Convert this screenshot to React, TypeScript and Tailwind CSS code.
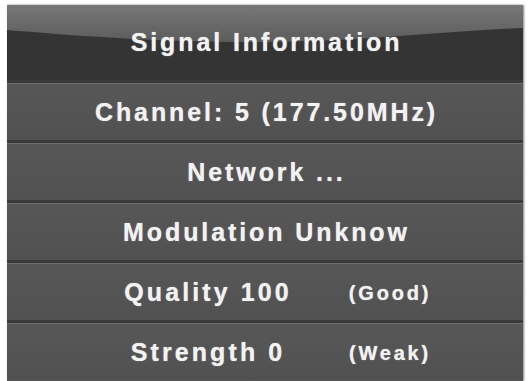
export default function App() {
  const rows = ["Channel: 5 (177.50MHz)", "Network ...", "Modulation Unknow"];
  const stats = [
    { label: "Quality 100", note: "(Good)" },
    { label: "Strength 0", note: "(Weak)" },
  ];

  return (
    <div className="w-[528px] h-[381px] bg-white pl-[7px] pr-[5px] pt-[5px] font-['Liberation_Sans',Arial,sans-serif] font-bold text-[#f2f2f2] [text-shadow:0_0_1px_rgba(255,255,255,0.7)]">
      <div className="h-[376px] flex flex-col bg-[#555] shadow-[1px_0_2px_rgba(0,0,0,0.5)]">
        {/* header with glossy band */}
        <div className="relative h-[75px] flex items-center justify-center bg-[#343434] overflow-hidden">
          <svg className="absolute inset-0" width="516" height="75" viewBox="0 0 516 75" preserveAspectRatio="none">
            <defs>
              <linearGradient id="gloss" x1="0" y1="0" x2="0" y2="1">
                <stop offset="0" stopColor="#777" />
                <stop offset="1" stopColor="#5c5c5c" />
              </linearGradient>
            </defs>
            <path d="M0 0 H516 V23 C440 26 360 36 260 37 C160 38 60 30 0 25 Z" fill="url(#gloss)" />
          </svg>
          <span className="relative text-[25px] tracking-[2.9px] leading-none pl-[3px]">Signal Information</span>
        </div>
        {rows.map((r) => (
          <div
            key={r}
            className="h-[60px] flex items-center justify-center border-t-[3px] border-t-[#3a3a3a] shadow-[inset_0_1px_0_#6e6e6e] bg-gradient-to-b from-[#575757] to-[#515151]"
          >
            <span className="text-[25px] tracking-[2.9px] leading-none pl-[3px] pt-[2px]">{r}</span>
          </div>
        ))}
        {stats.map((s) => (
          <div
            key={s.label}
            className="h-[60px] flex items-center justify-center gap-[22px] pl-[8px] border-t-[3px] border-t-[#3a3a3a] shadow-[inset_0_1px_0_#6e6e6e] bg-gradient-to-b from-[#575757] to-[#515151]"
          >
            <span className="w-[220px] text-center text-[25px] tracking-[3.1px] leading-none pt-[2px]">{s.label}</span>
            <span className="w-[100px] text-center text-[20px] tracking-[2.8px] leading-none pt-[2px]">{s.note}</span>
          </div>
        ))}
      </div>
    </div>
  );
}
